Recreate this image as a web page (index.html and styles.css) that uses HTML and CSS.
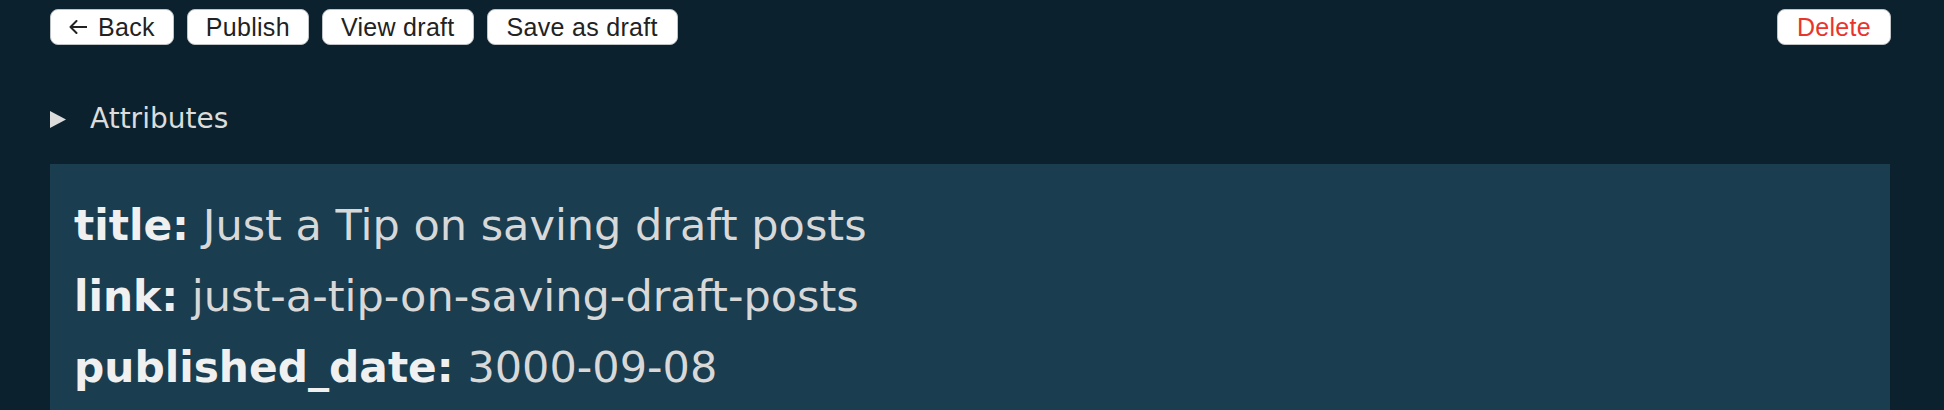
FILE: index.html
```html
<!DOCTYPE html>
<html lang="en">
<head>
<meta charset="utf-8">
<title>Edit post</title>
<link rel="stylesheet" href="styles.css">
</head>
<body>
<div class="toolbar">
  <div class="group">
    <button class="btn btn-back"><svg class="arrow" width="18" height="14" viewBox="0 0 18 14"><path d="M17.5 7H1.5M7.5 1L1.5 7L7.5 13" fill="none" stroke="#222222" stroke-width="2" stroke-linecap="round" stroke-linejoin="round"/></svg>Back</button>
    <button class="btn">Publish</button>
    <button class="btn">View draft</button>
    <button class="btn btn-wide">Save as draft</button>
  </div>
  <button class="btn btn-danger">Delete</button>
</div>
<div class="summary">
  <svg class="marker" width="16" height="17" viewBox="0 0 16 17"><polygon points="0,0 16,8.5 0,17" fill="#dcdcdc"/></svg>
  <span class="summary-label">Attributes</span>
</div>
<div class="panel">
  <div class="attr"><b class="key">title:</b> <span class="val">Just a Tip on saving draft posts</span></div>
  <div class="attr"><b class="key">link:</b> <span class="val">just-a-tip-on-saving-draft-posts</span></div>
  <div class="attr"><b class="key">published_date:</b> <span class="val">3000-09-08</span></div>
</div>
</body>
</html>
```

FILE: styles.css
```css
html, body {
  margin: 0;
  padding: 0;
  background: #0b222e;
  height: 100%;
  overflow: hidden;
}
.toolbar {
  display: flex;
  justify-content: space-between;
  align-items: flex-start;
  padding: 9px 53px 0 50px;
}
.group {
  display: flex;
  gap: 13px;
}
.btn {
  height: 36px;
  padding: 0 18px;
  margin: 0;
  background: #ffffff;
  border: 1px solid #bfc3c6;
  border-radius: 8px;
  font-family: "Liberation Sans", Arial, sans-serif;
  font-size: 25px;
  letter-spacing: 0.3px;
  color: #222222;
  line-height: 34px;
}
.btn-back {
  padding: 0 18px 0 18px;
}
.btn-wide {
  padding: 0 19px;
}
.arrow {
  vertical-align: middle;
  margin: -4px 11px 0 0;
}
.btn-danger {
  color: #e8352b;
  padding: 0 19px;
}
.summary {
  display: flex;
  align-items: center;
  margin-top: 58px;
  padding-left: 50px;
  height: 32px;
}
.marker {
  display: block;
  margin-right: 24px;
}
.summary-label {
  font-family: "DejaVu Sans", Verdana, sans-serif;
  font-size: 28px;
  line-height: 32px;
  color: #dcdcdc;
}
.panel {
  margin: 29px 54px 0 50px;
  background: #1a3d4f;
  padding: 26px 24px 40px;
  font-family: "DejaVu Sans", Verdana, sans-serif;
  font-size: 43px;
  line-height: 70px;
}
.key {
  color: #f0f0f0;
  font-weight: bold;
  font-size: 42.3px;
}
.val {
  color: #d8d8d8;
}
```
